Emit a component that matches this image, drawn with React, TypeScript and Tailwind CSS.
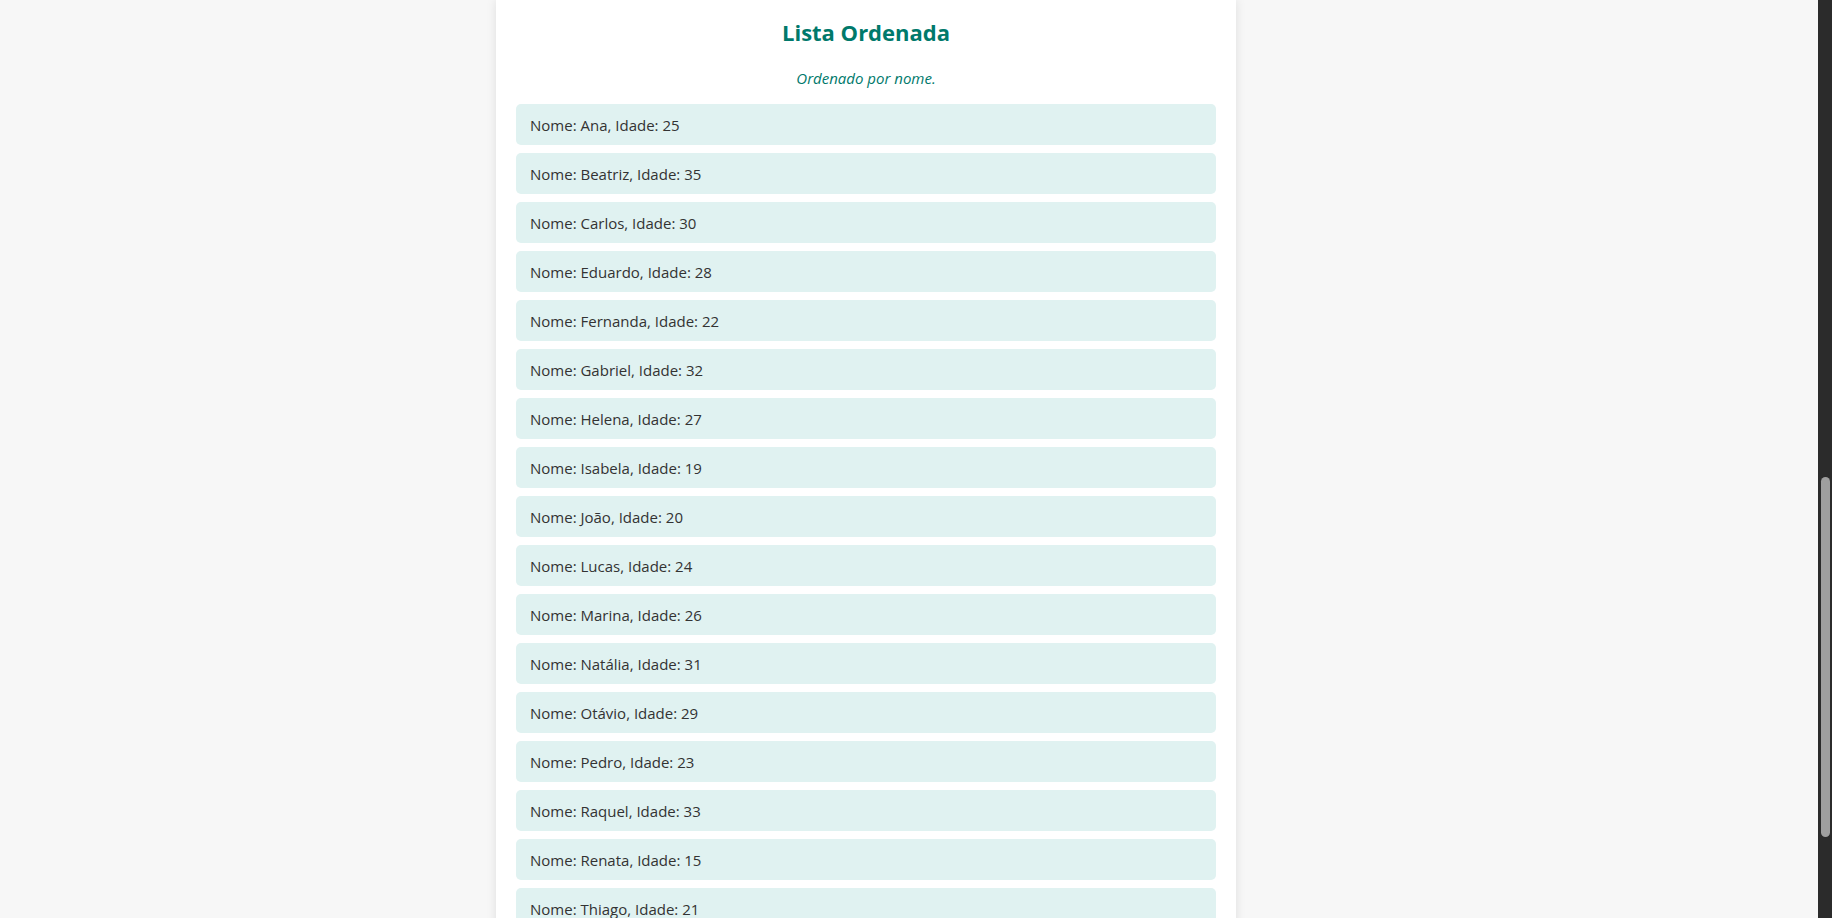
import React from 'react';

const pessoas = [
  { nome: 'Ana', idade: 25 },
  { nome: 'Beatriz', idade: 35 },
  { nome: 'Carlos', idade: 30 },
  { nome: 'Eduardo', idade: 28 },
  { nome: 'Fernanda', idade: 22 },
  { nome: 'Gabriel', idade: 32 },
  { nome: 'Helena', idade: 27 },
  { nome: 'Isabela', idade: 19 },
  { nome: 'João', idade: 20 },
  { nome: 'Lucas', idade: 24 },
  { nome: 'Marina', idade: 26 },
  { nome: 'Natália', idade: 31 },
  { nome: 'Otávio', idade: 29 },
  { nome: 'Pedro', idade: 23 },
  { nome: 'Raquel', idade: 33 },
  { nome: 'Renata', idade: 15 },
  { nome: 'Thiago', idade: 21 },
];

const App = () => {
  return (
    <div className="flex h-[918px] overflow-hidden bg-[#f7f7f7] font-['Open_Sans',sans-serif]">
      {/* Page */}
      <div className="flex-1">
        <div className="ml-[496px] w-[740px] bg-white px-[20px] pt-[16px] pb-[20px] shadow-[0_0_10px_rgba(0,0,0,0.1)]">
          <h1 className="mb-[18px] text-center text-[22px] font-bold leading-[32px] text-[#00796b]">
            Lista Ordenada
          </h1>
          <p className="mb-[14px] text-center text-[15px] italic leading-[24px] text-[#00796b]">
            Ordenado por nome.
          </p>
          <ul className="flex flex-col gap-[8px]">
            {pessoas.map((p) => (
              <li
                key={p.nome}
                className="rounded-[5px] bg-[#e0f2f1] px-[14px] pt-[11px] pb-[9px] text-[15px] leading-[21px] text-[#333]"
              >
                Nome: {p.nome}, Idade: {p.idade}
              </li>
            ))}
          </ul>
        </div>
      </div>

      {/* Scrollbar */}
      <div className="flex w-[14px] flex-col bg-[#2b2b2b] pt-[477px] pl-[3px] pr-[2px]">
        <div className="h-[360px] rounded-full bg-[#9f9f9f]" />
      </div>
    </div>
  );
};

export default App;
